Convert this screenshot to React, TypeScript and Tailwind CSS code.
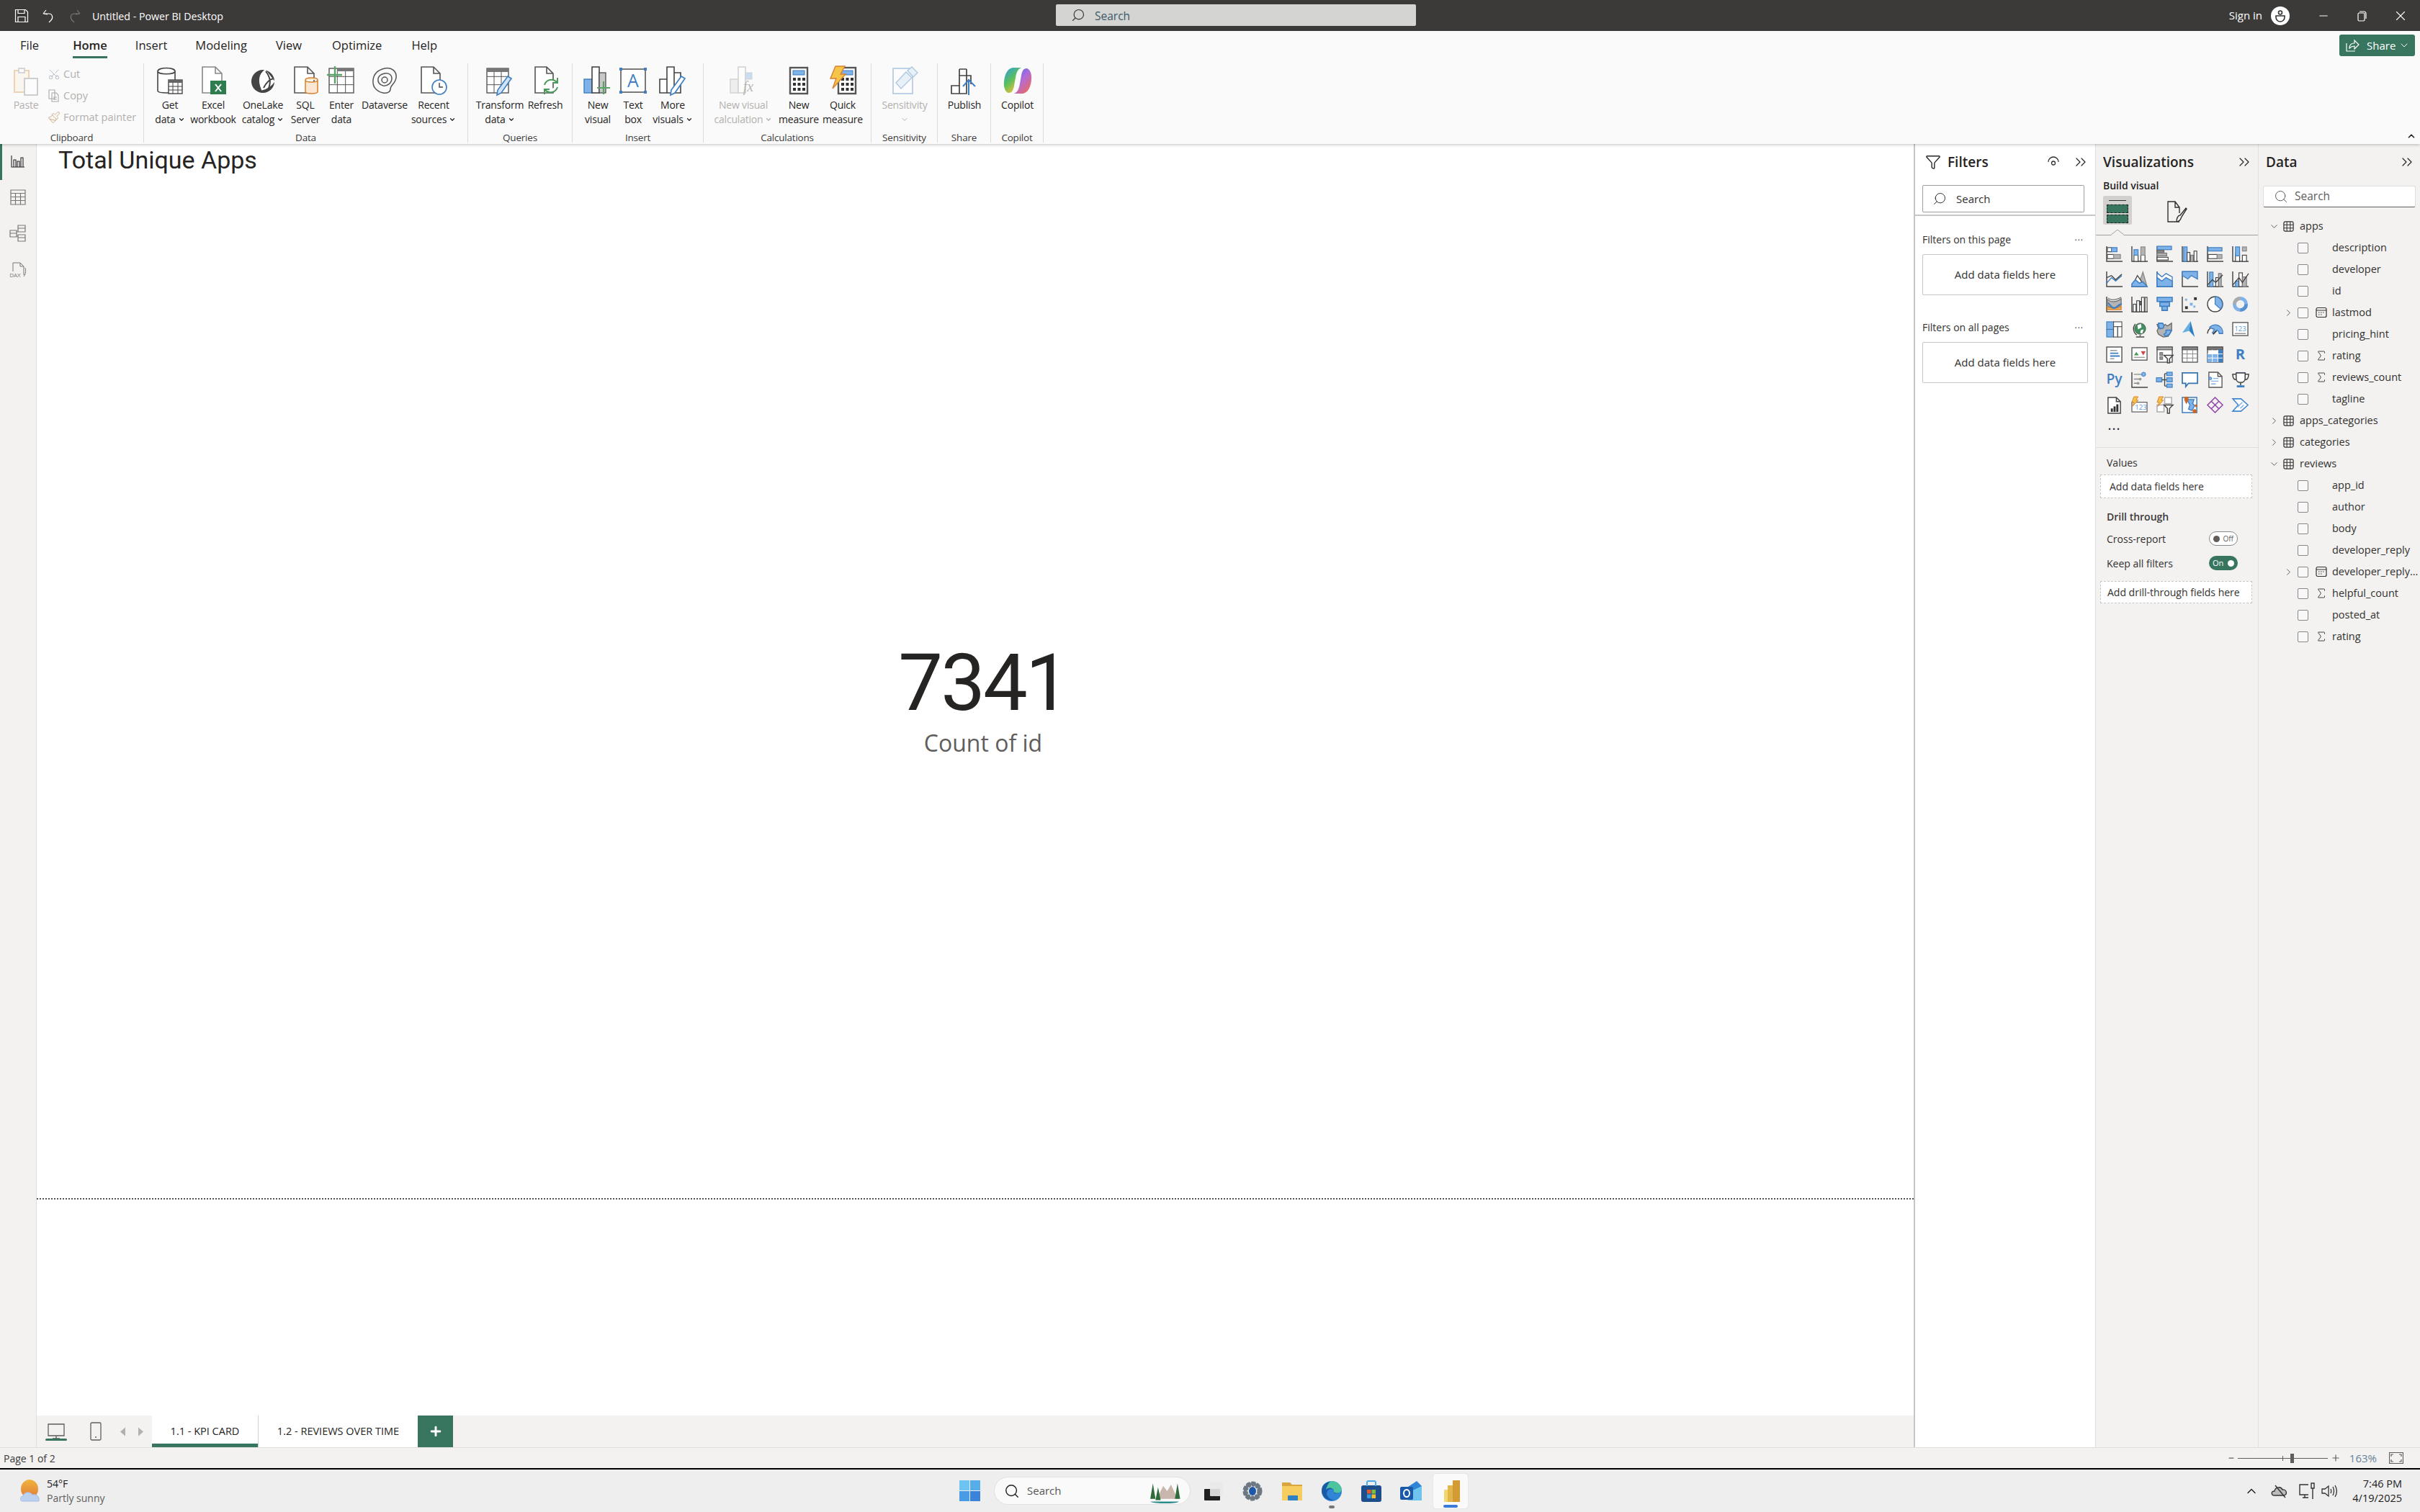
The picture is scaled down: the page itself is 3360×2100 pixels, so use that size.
import type { ReactNode } from "react"
import { ChevronDown, ChevronRight, ChevronUp, ChevronsRight, Funnel, Minus, Paintbrush, Plus, Scissors, Search, Sigma, X } from "lucide-react"

const D = "#444444"
const B = "#3f7fc1"
const L = "#7fb2e8"
const G = "#b4b4b4"

// small drawing helpers for the ribbon and visual gallery icons
function Box({ x, y, w, h, f = "#fff", s = D, sw = 1.2 }: { x: number; y: number; w: number; h: number; f?: string; s?: string; sw?: number }) {
    return <rect x={x} y={y} width={w} height={h} fill={f} stroke={s} strokeWidth={sw} />
}
function Ln({ d, s = D, sw = 1.4, f = "none" }: { d: string; s?: string; sw?: number; f?: string }) {
    return <path d={d} fill={f} stroke={s} strokeWidth={sw} />
}
const Axis = () => <Ln d="M1 1v22h23" sw={1.5} />
const Grid = ({ x, y, w, h, c = D }: { x: number; y: number; w: number; h: number; c?: string }) => (
    <g>
        <Box x={x} y={y} w={w} h={h} s={c} sw={1.4} />
        <Ln s={c} sw={1} d={`M${x} ${y + h / 3}h${w}M${x} ${y + (2 * h) / 3}h${w}M${x + w / 3} ${y}v${h}M${x + (2 * w) / 3} ${y}v${h}`} />
    </g>
)
const Pencil = () => (
    <g>
        <Ln d="M31 14l5 3-14 20-6 3 1-7z" f="#cfe2f7" s={B} sw={1.6} />
    </g>
)
const Tx = ({ x, y, t, size, c, w = 400 }: { x: number; y: number; t: string; size: number; c: string; w?: number }) => (
    <text x={x} y={y} fontSize={size} fill={c} fontWeight={w} textAnchor="middle" fontFamily="'Open Sans',sans-serif">{t}</text>
)
const Calc = ({ x = 8 }: { x?: number }) => (
    <g>
        <rect x={x} y={2} width={24} height={36} fill="#fff" stroke="#555" strokeWidth="2.4" />
        <rect x={x + 4} y={6} width={16} height={6} fill={L} stroke={B} />
        {[16, 23, 30].map((y) => [4, 10.5, 17].map((dx) => <rect key={`${y}-${dx}`} x={x + dx} y={y} width={4} height={4} fill="#333" />))}
    </g>
)

const ribbonIcons: Record<string, ReactNode> = {
    paste: (
        <g opacity="0.45">
            <Ln s="#d9a55f" f="#fbf0df" sw={2} d="M4 6h20v30H4z" />
            <Ln s="#aaa" f="#fff" sw={2} d="M10 3h8v6h-8z" />
            <Ln s="#999" f="#fff" sw={2} d="M18 17h18v23H18z" />
        </g>
    ),
    getData: (
        <g>
            <Ln f="#fff" sw={1.6} d="M3 7c0-6 24-6 24 0v27c0 4-24 4-24 0z M3 7c0 5 24 5 24 0" />
            <rect x="18" y="19" width="19" height="19" fill="#fff" stroke={D} strokeWidth="1.4" />
            <rect x="18" y="19" width="19" height="4" fill="#666" />
            <Ln sw={1} d="M18 28h19M18 33h19M24 23v15M31 23v15" />
        </g>
    ),
    excel: (
        <g>
            <Ln s="#888" f="#fff" sw={1.6} d="M5 1h18l9 9v27H5z M23 1v9h9" />
            <rect x="16" y="20" width="22" height="19" fill="#2f7d4f" />
            <Ln s="#fff" sw={2} d="M23 25l8 10M31 25l-8 10" />
        </g>
    ),
    oneLake: (
        <g>
            <circle cx="20" cy="21" r="16" fill="#444" />
            <Ln s="#fff" sw={2.5} f="#fff" d="M23 6c-8 6-9 14-4 26 6-1 13-6 16-11-4-5-7-9-12-15z" />
            <Ln s="#444" sw={2} d="M24 7c6 8 8 15 3 26M21 30c4-8 9-12 14-13" />
        </g>
    ),
    sql: (
        <g>
            <Ln s="#555" f="#fff" sw={1.6} d="M5 1h18l9 9v27H5z M23 1v9h9" />
            <Ln s="#d9812c" f="#fbe7d2" sw={1.5} d="M20 19c0-4 17-4 17 0v16c0 4-17 4-17 0z M20 19c0 4 17 4 17 0" />
        </g>
    ),
    enter: (
        <g>
            <Grid x={3} y={3} w={34} h={34} c="#555" />
            <rect x="14" y="3" width="23" height="4" fill="#777" />
            <Ln s="#5aa469" sw={2.4} d="M11 0v24M0 12h21" />
        </g>
    ),
    dataverse: (
        <g>
            <Ln s="#555" sw={1.5} d="M20 3c10-2 17 4 16 13-1 8-8 10-8 16 0 4-5 6-10 5C8 35 3 28 4 19 5 10 12 5 20 3z" />
            <Ln s="#555" sw={1.5} d="M20 10c6-1 10 2 10 7 0 6-6 11-12 10-5-1-8-5-7-10 1-4 4-6 9-7z" />
            <circle cx="20" cy="19" r="4" fill="none" stroke="#555" strokeWidth="1.5" />
        </g>
    ),
    recent: (
        <g>
            <Ln s="#555" f="#fff" sw={1.6} d="M3 1h17l9 9v27H3z M20 1v9h9" />
            <circle cx="28" cy="29" r="10" fill="#fff" stroke={B} strokeWidth="1.6" />
            <Ln s="#444" sw={1.4} d="M28 23v6h5" />
        </g>
    ),
    transform: (
        <g>
            <Grid x={2} y={3} w={30} h={34} c="#555" />
            <rect x="2" y="3" width="30" height="5" fill="#777" />
            <Pencil />
        </g>
    ),
    refresh: (
        <g>
            <Ln s="#555" f="#fff" sw={1.6} d="M6 1h16l9 9v27H6z M22 1v9h9" />
            <Ln s="#4c9a5b" f="#fff" sw={2} d="M19 26a10 10 0 0 1 17-4M37 29a10 10 0 0 1-17 4" />
            <Ln s="#4c9a5b" sw={2} d="M37 16v7h-7M19 39v-7h7" />
        </g>
    ),
    newVisual: (
        <g>
            <rect x="1" y="18" width="11" height="19" fill={L} stroke={B} strokeWidth="1.4" />
            <rect x="12" y="1" width="10" height="36" fill="#fff" stroke={D} strokeWidth="1.6" />
            <rect x="22" y="9" width="9" height="28" fill="#c8c8c8" stroke={D} strokeWidth="1.2" />
            <Ln s="#5aa469" sw={2.2} d="M28 21v18M19 30h18" />
        </g>
    ),
    textBox: (
        <g>
            <rect x="3" y="4" width="34" height="32" fill="#fff" stroke={D} strokeWidth="1.4" />
            {[[3, 4], [37, 4], [3, 36], [37, 36]].map(([x, y]) => <rect key={`${x}${y}`} x={x - 2} y={y - 2} width="4" height="4" fill={B} />)}
            <Tx x={20} y={29} t="A" size={25} c={B} />
        </g>
    ),
    more: (
        <g>
            <Ln f="#fff" sw={1.6} d="M2 18h10v19H2zM12 1h10v36H12zM22 9h9v28h-9z" />
            <Ln d="M32 14l5 3-14 20-6 3 1-7z" f="#fff" s={B} sw={1.7} />
        </g>
    ),
    visualCalc: (
        <g opacity="0.4">
            <rect x="2" y="18" width="11" height="19" fill="#ddd" stroke="#999" strokeWidth="1.4" />
            <rect x="13" y="1" width="10" height="36" fill="#fff" stroke="#999" strokeWidth="1.6" />
            <rect x="23" y="9" width="9" height="9" fill={L} stroke="#999" />
            <text x="27" y="35" fontSize="20" fontStyle="italic" fill="#555" textAnchor="middle" fontFamily="'Liberation Serif',serif">fx</text>
        </g>
    ),
    measure: <Calc />,
    quick: (
        <g>
            <Calc x={14} />
            <Ln s="#d9812c" f="#f6c44a" sw={1.4} d="M10 0h13l-6 11h7L6 31l5-14H3z" />
        </g>
    ),
    sensitivity: (
        <g opacity="0.4">
            <rect x="4" y="3" width="27" height="35" fill="#fff" stroke={B} strokeWidth="1.6" />
            <Ln s={B} f="#cfe2f7" sw={1.4} d="M24 6l6-5 8 8-6 6zM22 8l8 8-15 15-7-8z" />
        </g>
    ),
    publish: (
        <g>
            <Ln s="#444" f="#fff" sw={1.7} d="M2 27h11v11H2zM13 13h10v25H13zM13 4h10M23 4v9" />
            <Ln s="#444" sw={1.7} d="M13 4v9M23 13h6v12" />
            <Ln s={B} sw={2} d="M26 40V18M18 28l8-9 9 9" />
        </g>
    ),
    copilot: (
        <g>
            <defs>
                <linearGradient id="cpa" x1="0" y1="0" x2="0.6" y2="1">
                    <stop offset="0" stopColor="#2f9de0" />
                    <stop offset="0.55" stopColor="#5bc05b" />
                    <stop offset="1" stopColor="#f2c037" />
                </linearGradient>
                <linearGradient id="cpb" x1="0" y1="0" x2="0.8" y2="1">
                    <stop offset="0" stopColor="#3f6fe0" />
                    <stop offset="0.5" stopColor="#b06bdc" />
                    <stop offset="1" stopColor="#ee6a5a" />
                </linearGradient>
            </defs>
            <path d="M13 2h12c-5 2-7 7-8 14l-2 11c-1 6-3 10-7 10C3 37 0 29 1 21 2 11 6 3 13 2z" fill="url(#cpa)" />
            <path d="M27 38H15c5-2 7-7 8-14l2-11c1-6 3-10 7-10 5 0 8 8 7 16-1 10-5 18-12 19z" fill="url(#cpb)" />
        </g>
    ),
}

function RibbonIcon({ name }: { name: string }) {
    return <svg viewBox="0 0 40 40" className="w-[40px] h-[40px] overflow-visible">{ribbonIcons[name]}</svg>
}

function RibbonButton({ w, icon, lines, caret, off }: { w: number; icon: string; lines: string[]; caret?: boolean; off?: boolean }) {
    return (
        <div style={{ width: w }} className={`flex flex-col items-center shrink-0 ${off ? "text-[#b3b0ad]" : "text-[#252423]"}`}>
            <div className="mt-[4px] h-[44px]"><RibbonIcon name={icon} /></div>
            {lines.map((l, i) => (
                <div key={l} className="h-[20px] leading-[20px] text-[14px] tracking-[-0.2px] whitespace-nowrap flex items-center">
                    {l}
                    {caret && i === lines.length - 1 && <ChevronDown size={10} strokeWidth={3} className="ml-[3px]" />}
                </div>
            ))}
            {off && lines.length === 1 && <ChevronDown size={12} strokeWidth={2} className="mt-[4px]" />}
        </div>
    )
}

function RibbonGroup({ w, pl = 0, label, children }: { w: number; pl?: number; label: string; children: ReactNode }) {
    return (
        <div style={{ width: w, paddingLeft: pl }} className="relative h-[110px] shrink-0 border-r border-[#dcdad8]">
            <div className="flex">{children}</div>
            <div className="absolute bottom-[-3px] left-0 right-0 text-center text-[13.500px] tracking-[-0.2px] leading-[20px] text-[#3b3a39]">{label}</div>
        </div>
    )
}

// visualization gallery, left to right, top to bottom
const vizIcons: ReactNode[] = [
    <g><Axis /><Box x={2} y={3} w={6} h={6} /><Box x={8} y={3} w={8} h={6} f={L} s={B} /><Box x={2} y={13} w={9} h={6} /><Box x={11} y={13} w={10} h={6} f={G} s="#888" /></g>,
    <g><Axis /><Box x={4} y={14} w={6} h={9} /><Box x={4} y={6} w={6} h={8} f={L} s={B} /><Box x={14} y={14} w={6} h={9} /><Box x={14} y={2} w={6} h={12} f={G} s="#888" /></g>,
    <g><Axis /><Box x={1} y={1} w={21} h={5} f={L} s={B} /><Box x={1} y={7} w={10} h={4} f="#888" s="#666" /><Box x={1} y={11} w={14} h={4} f={G} s="#777" /><Box x={1} y={17} w={16} h={4} /></g>,
    <g><Axis /><Box x={3} y={2} w={5} h={21} f={L} s={B} /><Box x={8} y={10} w={4} h={13} /><Box x={13} y={14} w={4} h={9} f={G} s="#777" /><Box x={18} y={8} w={4} h={15} /></g>,
    <g><Axis /><Box x={2} y={3} w={20} h={5} f={L} s={B} /><Box x={2} y={13} w={13} h={6} /><Box x={15} y={13} w={7} h={6} f={G} s="#888" /></g>,
    <g><Axis /><Box x={5} y={11} w={6} h={12} /><Box x={5} y={2} w={6} h={13} f={L} s={B} /><Box x={15} y={14} w={6} h={9} /><Box x={15} y={2} w={6} h={6} f={G} s="#888" /></g>,
    <g><Axis /><Ln s={B} d="M1 18l7-8 6 5 9-8" /><Ln d="M1 10l7-3 6 6 9-8" /></g>,
    <g><Ln f={G} s="#888" d="M8 23L15 8l2-6 6 21z" /><Ln f="#fff" d="M1 23L9 7l5 7 4 9z" /><Ln s={B} f={L} sw={1.6} d="M1 23v-4l5-6 6 5 5-2 6 7z" /></g>,
    <g><Axis /><Ln s={B} f="#fff" d="M1 3l7 6 6-5 9 5v14H1z" /><Ln s={B} f={L} d="M1 10l7 5 6-5 9 5v8H1z" /></g>,
    <g><Axis /><Ln s={B} f={L} d="M1 1h22v11l-9-5-5 5-8-5z" /></g>,
    <g><Axis /><Box x={4} y={2} w={5} h={21} f={L} s={B} /><Box x={13} y={10} w={4} h={13} /><Box x={17} y={4} w={4} h={19} f={G} s="#777" /><Ln d="M1 21l7-8 5 4 10-11" /></g>,
    <g><Axis /><Box x={5} y={15} w={5} h={8} f={L} s={B} /><Box x={10} y={3} w={5} h={20} /><Box x={15} y={9} w={6} h={14} f={G} s="#777" /><Ln d="M1 21l9-11 5 7 9-13" /></g>,
    <g><Axis /><Ln f={G} s="#777" d="M2 5c6 5 13 4 20-1v9c-7 5-14 6-20 1z" /><Ln s="#d9812c" f="#e8b26a" d="M2 16c6 2 14 3 20-1v5H2z" /><Ln s={B} sw={2.4} d="M3 10c5 6 7 9 11 7 4-2 5-6 9-5" /><Ln d="M3 3c5 4 11 3 19-1" sw={1} /></g>,
    <g><Axis /><Box x={3} y={12} w={4} h={11} /><Box x={8} y={7} w={4} h={16} /><Box x={12} y={8} w={3} h={5} f="#666" /><Box x={15} y={2} w={4} h={21} /><Box x={20} y={2} w={3} h={21} /></g>,
    <g><Ln s={B} f={L} sw={1.6} d="M1 2h22v6H1zM5 9h14v6H5zM8 15h8v6H8z" /></g>,
    <g><Axis /><rect x="5" y="4" width="3" height="3" fill={L} /><rect x="12" y="10" width="4" height="4" fill={L} /><rect x="18" y="2" width="4" height="4" fill="#333" /><rect x="5" y="15" width="4" height="4" fill="#333" /><rect x="17" y="14" width="3" height="3" fill={L} /></g>,
    <g><circle cx="12" cy="12" r="11" fill="#fff" stroke={D} strokeWidth="1.4" /><path d="M12 12V1a11 11 0 0 1 8 18z" fill={L} stroke={B} strokeWidth="1.2" /></g>,
    <g><circle cx="12" cy="12" r="8.5" fill="none" stroke={L} strokeWidth="5" /><path d="M12 20.5A8.5 8.5 0 0 0 20.5 12" fill="none" stroke={B} strokeWidth="5" opacity="0.65" /><path d="M3.5 12A8.5 8.5 0 0 1 12 3.500" fill="none" stroke="#aaa" strokeWidth="5" /></g>,
    <g><Box x={1} y={1} w={10} h={11} f={L} s={B} /><Box x={1} y={12} w={10} h={11} f={L} s={B} /><Box x={11} y={1} w={12} h={7} s="#555" /><Box x={11} y={8} w={6} h={15} s="#555" /><Box x={17} y={8} w={6} h={15} s="#555" /></g>,
    <g><circle cx="13" cy="11" r="8" fill="#3f8f5f" stroke="#555" /><path d="M9 6l5-2 1 5-5 3zM14 13l4-1-2 6-3-1z" fill="#fff" /><Ln d="M6 4a11 11 0 0 0 2 16M13 20v2M7 23h12" /></g>,
    <g><Ln s="#666" f={G} d="M1 5l6 0 2 2 4-2 3 2 6-4v11l-5 8-7 1-7-4-2-5 2-4z" /><Ln s={B} f={L} sw={1.6} d="M3 3h6l2 3-1 4-5 1-2-4zM14 13h8l-3 6-6 3-2-3 3-2z" /></g>,
    <g><path d="M13 0L1 17l10-3z" fill="#65b0e0" /><path d="M13 0L11 14l8 9z" fill="#2f7fc1" /></g>,
    <g><Ln sw={1.6} d="M1 18a11 11 0 0 1 6-9" /><Ln s={B} f={L} d="M4 9a11 11 0 0 1 19 9h-5a6 6 0 0 0-3-5l-5 5-2-1 3-5a6 6 0 0 0-3-1z" /><Ln sw={2} d="M9 19l5-5" /></g>,
    <g><Box x={1} y={2} w={22} h={19} s="#555" sw={1.4} /><Tx x={12} y={15} t="123" size={10} c="#5a9bd8" /><Ln s="#888" d="M4 18h16" /></g>,
    <g><Box x={1} y={1} w={22} h={22} s="#555" sw={1.5} /><Ln s="#999" d="M6 6h10M6 18h6" /><Ln s={B} sw={2} d="M6 10h12M6 14h14" /></g>,
    <g><Box x={1} y={2} w={22} h={18} s="#555" sw={1.4} /><path d="M4 13l3.500-5 3.500 5z" fill="#4c9a5b" /><path d="M14 7h7l-3.500 6z" fill="#d64545" /><Ln s="#999" d="M4 16h16" /></g>,
    <g><Box x={1} y={1} w={22} h={22} s="#555" sw={1.4} /><Box x={1} y={1} w={22} h={4} f="#aaa" s="#555" /><Box x={5} y={9} w={4} h={4} f="#999" s="#777" /><Box x={5} y={15} w={4} h={4} f="#999" s="#777" /><Ln f="#fff" sw={1.6} d="M11 13h13l-5 5v6h-3v-6z" /></g>,
    <g><Box x={1} y={1} w={22} h={22} s="#555" sw={1.4} /><Box x={1} y={1} w={22} h={4} f="#888" s="#555" /><Ln s="#888" sw={1} d="M1 11h22M1 17h22M8 5v18M16 5v18" /></g>,
    <g><Box x={1} y={1} w={22} h={22} s="#555" sw={1.4} /><Box x={1} y={1} w={22} h={4} f="#777" s="#555" /><rect x="1" y="11" width="15" height="12" fill={L} /><rect x="16" y="5" width="7" height="18" fill={B} /><Ln s="#fff" sw={1} d="M1 11h22M1 17h22M8 5v18M16 5v18" /></g>,
    <Tx x={12} y={19} t="R" size={21} c={B} w={700} />,
    <Tx x={12} y={18} t="Py" size={20} c={B} w={600} />,
    <g><Axis /><Ln s="#888" d="M4 4h12M4 11h8M4 17h6" /><circle cx="18" cy="4" r="3" fill={L} stroke={B} /><circle cx="13" cy="11" r="2" fill="#999" /><circle cx="10" cy="17" r="2" fill="#999" /></g>,
    <g><Box x={0} y={9} w={8} h={6} f={L} s={B} /><Ln d="M8 12h5M12 3v18M12 3h3M12 12h3M12 21h3" /><Box x={15} y={1} w={8} h={5} f={L} s={B} /><Box x={15} y={9} w={8} h={6} f={L} s={B} /><Box x={15} y={18} w={8} h={5} f={L} s={B} /></g>,
    <g><Ln s="#3575ad" f="#fff" sw={1.8} d="M1 2h22v15H10l-4 5v-5H1z" /></g>,
    <g><Ln s="#555" f="#fff" sw={1.4} d="M3 1h13l6 6v16H3z M16 1v6h6" /><circle cx="5" cy="10" r="2" fill={L} stroke={B} /><Ln s={L} d="M9 10h8M6 14h11M6 18h7" /></g>,
    <g><rect x="6" y="1" width="13" height="3" fill={B} /><Ln f="#fff" sw={1.6} d="M6 2h13v8c0 4-3 6-6.500 6S6 14 6 10zM6 4H1c0 6 2 8 5 8M19 4h5c0 6-2 8-5 8M12.500 16v4" /><rect x="7" y="20" width="11" height="3" fill={B} /></g>,
    <g><Ln f="#fff" sw={1.5} d="M3 1h12l6 6v17H3z M15 1v6h6" /><rect x="7" y="17" width="3" height="5" fill="#333" /><rect x="11" y="14" width="3" height="8" fill="#333" /><rect x="15" y="11" width="3" height="11" fill="#333" /></g>,
    <g><Box x={1} y={8} w={22} h={14} s="#555" /><Tx x={14} y={19} t="123" size={10} c="#5a9bd8" /><Ln s="#d9812c" f="#f6c44a" sw={1} d="M4 0h6l-3 5h3L2 14l2-6H1z" /></g>,
    <g><Box x={12} y={1} w={10} h={9} s="#aaa" sw={1.5} /><Box x={1} y={12} w={10} h={10} s="#aaa" sw={1.5} /><Ln f="#fff" sw={1.5} d="M11 12h13l-5 5v7h-3v-7z" /><Ln s="#d9812c" f="#f6c44a" sw={1} d="M4 0h6l-3 5h3L2 14l2-6H1z" /></g>,
    <g><Box x={1} y={1} w={21} h={22} s={B} sw={1.6} /><Ln s={B} f={L} d="M8 4h10l-2 6 3 3-4 7-5-2 2-6z" /><path d="M4 0h6v5l-3 6-3-6z" fill="#c9682a" /><circle cx="21" cy="13" r="2" fill="#c9682a" /><circle cx="19" cy="21" r="3" fill="#c9682a" /></g>,
    <g><Ln s="#8e3fa8" f="none" sw={1.5} d="M12 1l11 11-11 11L1 12zM6.500 6.500l11 11M17.500 6.500l-11 11" /></g>,
    <g><Ln s="#3f86cf" f="#fff" sw={1.6} d="M1 3h12l10 9-10 9H1l8-9z" /><Ln s={L} sw={1.5} d="M8 15l7-7M12 17l5-5" /></g>,
]

function VizIcon({ children }: { children: ReactNode }) {
    return (
        <div className="w-[35px] h-[35px] flex items-center justify-center">
            <svg viewBox="0 0 24 24" className="w-[23px] h-[23px] overflow-visible">{children}</svg>
        </div>
    )
}

const TableGlyph = () => (
    <svg viewBox="0 0 16 16" className="w-[15px] h-[15px] shrink-0">
        <rect x="1" y="1" width="14" height="14" rx="2" fill="none" stroke="#323130" strokeWidth="1.3" />
        <path d="M1 5.500h14M1 10.500h14M5.500 1v14M10.500 1v14" stroke="#323130" strokeWidth="1.1" />
    </svg>
)
const CalGlyph = () => (
    <svg viewBox="0 0 16 16" className="w-[16px] h-[16px]">
        <rect x="1" y="1.500" width="14" height="13" rx="2" fill="none" stroke="#323130" strokeWidth="1.2" />
        <path d="M1 5h14" stroke="#323130" />
        <path d="M4 8h1.500M7 8h1.500M10 8h1.500M4 11h1.500M7 11h1.500" stroke="#323130" />
    </svg>
)

function TableRow({ name, open }: { name: string; open?: boolean }) {
    return (
        <div className="h-[30px] flex items-center text-[14.500px] text-[#323130]">
            <div className="w-[34px] flex justify-end pr-[5px]">
                {open ? <ChevronDown size={15} strokeWidth={1.2} /> : <ChevronRight size={15} strokeWidth={1.2} />}
            </div>
            <TableGlyph />
            <span className="ml-[8px]">{name}</span>
        </div>
    )
}

function FieldRow({ name, kind, expand }: { name: string; kind?: "sum" | "date"; expand?: boolean }) {
    return (
        <div className="h-[30px] flex items-center text-[14.500px] text-[#323130]">
            <div className="w-[54px] flex justify-end pr-[5px]">
                {expand && <ChevronRight size={15} strokeWidth={1.2} />}
            </div>
            <div className="w-[15px] h-[15px] border border-[#8a8886] rounded-[2px] bg-[#f8f8f8] shrink-0" />
            <div className="w-[33px] flex justify-center pl-[3px] shrink-0">
                {kind === "sum" && <Sigma size={18} strokeWidth={1.2} />}
                {kind === "date" && <CalGlyph />}
            </div>
            <span className="whitespace-nowrap">{name}</span>
        </div>
    )
}

function FilterBlock({ label }: { label: string }) {
    return (
        <div className="h-[122px]">
            <div className="h-[42px] flex items-center justify-between text-[14px] text-[#323130] pr-[4px]">
                <span>{label}</span>
                <span className="tracking-[1px] text-[12px] pb-[4px]">...</span>
            </div>
            <div className="w-[230px] h-[57px] bg-white border border-[#c8c6c4] rounded-[2px] flex items-center justify-center text-[15px] text-[#323130]">
                Add data fields here
            </div>
        </div>
    )
}

function Toggle({ on }: { on?: boolean }) {
    if (on) {
        return (
            <div className="w-[40px] h-[20px] rounded-full bg-[#37755f] flex items-center justify-between px-[5px] text-[11px] text-white">
                On<div className="w-[9px] h-[9px] rounded-full bg-white" />
            </div>
        )
    }
    return (
        <div className="w-[40px] h-[20px] rounded-full border border-[#8a8886] bg-white flex items-center justify-between px-[5px] text-[10px] text-[#605e5c]">
            <div className="w-[9px] h-[9px] rounded-full bg-[#605e5c]" />Off
        </div>
    )
}

function TaskIcon({ children, active, dot }: { children: ReactNode; active?: boolean; dot?: boolean }) {
    return (
        <div className={`relative w-[48px] h-[48px] rounded-[4px] flex items-center justify-center mx-[3.500px] ${active ? "bg-[#fafafa] shadow-[0_0_1px_#bbb]" : ""}`}>
            <svg viewBox="0 0 32 32" className="w-[32px] h-[32px]">{children}</svg>
            {active && <div className="absolute bottom-[1px] w-[20px] h-[4px] rounded-full bg-[#3a7bd5]" />}
            {dot && <div className="absolute bottom-[0px] w-[8px] h-[4px] rounded-full bg-[#777]" />}
        </div>
    )
}

export default function App() {
    return (
        <div className="w-[3360px] h-[2100px] overflow-hidden flex flex-col bg-white font-['Open_Sans',sans-serif] text-[#252423]">
            {/* Title bar */}
            <div className="relative h-[43px] shrink-0 bg-[#3b3a39] flex items-center text-white">
                <svg viewBox="0 0 20 20" className="ml-[20px] w-[20px] h-[20px]" fill="none" stroke="#fff" strokeWidth="1.2">
                    <path d="M1.500 1.500h14l3 3v14h-17zM5 1.500v5h9v-5M5 18.500v-7h10v7" />
                </svg>
                <svg viewBox="0 0 20 20" className="ml-[17px] w-[20px] h-[20px]" fill="none" stroke="#fff" strokeWidth="1.2">
                    <path d="M3 7l4-5M3 7l6 1M3 7h8c5 0 6 6 3 9l-3 3" />
                </svg>
                <svg viewBox="0 0 20 20" className="ml-[17px] w-[20px] h-[20px]" fill="none" stroke="#777" strokeWidth="1.2">
                    <path d="M17 7l-4-5M17 7l-6 1M17 7H9C4 7 3 13 6 16l3 3" />
                </svg>
                <span className="ml-[14px] mt-[3px] text-[14.200px]">Untitled - Power BI Desktop</span>

                <div className="absolute left-[1466px] top-[6px] w-[500px] h-[30px] bg-[#d4d4d2] rounded-[2px] flex items-center pl-[21px] text-[#3b5a6a] text-[15.500px]">
                    <Search size={20} strokeWidth={1.4} className="-scale-x-100 text-[#333]" />
                    <span className="ml-[13px] mt-[3px]">Search</span>
                </div>

                <div className="ml-auto flex items-center">
                    <span className="text-[15px]">Sign in</span>
                    <div className="ml-[12px] w-[26px] h-[26px] rounded-full bg-white flex items-center justify-center">
                        <svg viewBox="0 0 20 20" className="w-[20px] h-[20px]" fill="none" stroke="#333" strokeWidth="1.6">
                            <circle cx="10" cy="5.500" r="2.500" />
                            <path d="M4 10h12v2a6 6 0 0 1-12 0z" />
                        </svg>
                    </div>
                    <Minus size={18} strokeWidth={1.3} className="ml-[38px]" />
                    <svg viewBox="0 0 16 16" className="ml-[36px] w-[16px] h-[16px]" fill="none" stroke="#fff" strokeWidth="1.2">
                        <rect x="3" y="4" width="9" height="11" rx="1.500" />
                        <path d="M5 2h6a3 3 0 0 1 3 3v7" />
                    </svg>
                    <X size={22} strokeWidth={1.2} className="ml-[35px] mr-[16px]" />
                </div>
            </div>

            {/* Ribbon */}
            <div className="relative z-10 h-[157px] shrink-0 bg-[#fafafa] shadow-[0_1px_4px_rgba(0,0,0,0.25)]">
                <div className="h-[45px] flex text-[16.500px] text-[#252423]">
                    {[
                        ["File", "ml-[28px]"],
                        ["Home", "ml-[47px] font-semibold border-b-[3px] border-[#37755f]"],
                        ["Insert", "ml-[39px]"],
                        ["Modeling", "ml-[39px]"],
                        ["View", "ml-[40px]"],
                        ["Optimize", "ml-[42px]"],
                        ["Help", "ml-[41px]"],
                    ].map(([t, c]) => (
                        <div key={t} className={`h-[38px] pt-[8px] leading-[24px] whitespace-nowrap ${c}`}>{t}</div>
                    ))}
                </div>
                <div className="flex">
                    <RibbonGroup w={200} label="Clipboard">
                        <div className="flex flex-col items-center w-[66px] pl-[6px] text-[#b3b0ad]">
                            <div className="mt-[4px] h-[44px]"><RibbonIcon name="paste" /></div>
                            <div className="text-[14px] tracking-[-0.2px] leading-[20px]">Paste</div>
                        </div>
                        <div className="text-[14.500px] text-[#b3b0ad]">
                            <div className="h-[30px] flex items-center"><Scissors size={18} strokeWidth={1.2} className="-rotate-90 text-[#8a9ab0] opacity-70" /><span className="ml-[4px]">Cut</span></div>
                            <div className="h-[30px] flex items-center">
                                <svg viewBox="0 0 18 18" className="w-[18px] h-[18px]" fill="#fff" stroke="#a8a6a4" strokeWidth="1.1">
                                    <path d="M2 1h8v12H2zM6 5h6l3 3v9H6zM8 11h5M8 14h5" />
                                </svg>
                                <span className="ml-[4px]">Copy</span>
                            </div>
                            <div className="h-[30px] flex items-center"><Paintbrush size={18} strokeWidth={1.2} className="text-[#c9a87a]" /><span className="ml-[4px] whitespace-nowrap">Format painter</span></div>
                        </div>
                    </RibbonGroup>
                    <RibbonGroup w={450} pl={6} label="Data">
                        <RibbonButton w={60} icon="getData" lines={["Get", "data"]} caret />
                        <RibbonButton w={60} icon="excel" lines={["Excel", "workbook"]} />
                        <RibbonButton w={78} icon="oneLake" lines={["OneLake", "catalog"]} caret />
                        <RibbonButton w={40} icon="sql" lines={["SQL", "Server"]} />
                        <RibbonButton w={60} icon="enter" lines={["Enter", "data"]} />
                        <RibbonButton w={60} icon="dataverse" lines={["Dataverse"]} />
                        <RibbonButton w={76} icon="recent" lines={["Recent", "sources"]} caret />
                    </RibbonGroup>
                    <RibbonGroup w={145} pl={4} label="Queries">
                        <RibbonButton w={80} icon="transform" lines={["Transform", "data"]} caret />
                        <RibbonButton w={46} icon="refresh" lines={["Refresh"]} />
                    </RibbonGroup>
                    <RibbonGroup w={182} pl={10} label="Insert">
                        <RibbonButton w={50} icon="newVisual" lines={["New", "visual"]} />
                        <RibbonButton w={48} icon="textBox" lines={["Text", "box"]} />
                        <RibbonButton w={62} icon="more" lines={["More", "visuals"]} caret />
                    </RibbonGroup>
                    <RibbonGroup w={233} pl={8} label="Calculations">
                        <RibbonButton w={94} icon="visualCalc" lines={["New visual", "calculation"]} caret off />
                        <RibbonButton w={60} icon="measure" lines={["New", "measure"]} />
                        <RibbonButton w={62} icon="quick" lines={["Quick", "measure"]} />
                    </RibbonGroup>
                    <RibbonGroup w={92} label="Sensitivity">
                        <RibbonButton w={92} icon="sensitivity" lines={["Sensitivity"]} off />
                    </RibbonGroup>
                    <RibbonGroup w={74} label="Share">
                        <RibbonButton w={74} icon="publish" lines={["Publish"]} />
                    </RibbonGroup>
                    <RibbonGroup w={73} label="Copilot">
                        <RibbonButton w={73} icon="copilot" lines={["Copilot"]} />
                    </RibbonGroup>
                </div>
                <div className="absolute top-[5px] right-[7px] w-[105px] h-[30px] rounded-[3px] bg-[#37755f] text-white flex items-center text-[15px] pl-[8px]">
                    <svg viewBox="0 0 20 20" className="w-[20px] h-[20px]" fill="none" stroke="#fff" strokeWidth="1.2">
                        <path d="M2 7v11h12M6 14c0-5 3-7 7-7V3l6 6-6 6v-4c-3 0-5 1-7 3z" />
                    </svg>
                    <span className="ml-[10px]">Share</span>
                    <ChevronDown size={16} strokeWidth={1.5} className="ml-[4px]" />
                </div>
                <ChevronUp size={14} strokeWidth={3} className="absolute right-[5px] bottom-[4px] text-[#252423]" />
            </div>

            {/* Main */}
            <div className="h-[1810px] shrink-0 flex">
                {/* Left rail */}
                <div className="w-[51px] shrink-0 bg-[#f3f2f1] border-r border-[#e1dfdd] flex flex-col items-center relative">
                    <div className="absolute left-0 top-0 w-[3px] h-[50px] bg-[#37755f]" />
                    <svg viewBox="0 0 20 20" className="mt-[14px] w-[20px] h-[20px]" fill="none" stroke="#252423" strokeWidth="1.1">
                        <path d="M1 2v16h18M4 8h3v10H4zM9 10h3v8H9zM14 5h3v13h-3z" />
                    </svg>
                    <svg viewBox="0 0 22 22" className="mt-[29px] w-[22px] h-[22px]" fill="none" stroke="#797775" strokeWidth="1.2">
                        <path d="M1 1h20v20H1zM1 5.500h20M1 10.500h20M1 15.500h20M7.500 5.500V21M14.500 5.500V21" />
                    </svg>
                    <svg viewBox="0 0 24 24" className="mt-[27px] w-[24px] h-[24px]" fill="none" stroke="#797775" strokeWidth="1.2">
                        <path d="M1 8h9v9H1zM1 12h9M12 1h10v9H12zM12 5h10M12 14h10v9H12zM12 18h10M10 10h2M10 16h2" />
                    </svg>
                    <svg viewBox="0 0 24 24" className="mt-[28px] w-[24px] h-[24px] overflow-visible" fill="none" stroke="#797775" strokeWidth="1">
                        <path d="M5 13V1h10l5 5v12M15 1v5h5M22 8c1 4 1 8-2 12" />
                        <text x="8" y="21" fontSize="8" fill="#797775" stroke="none" textAnchor="middle">DAX</text>
                    </svg>
                </div>

                {/* Canvas */}
                <div className="w-[2606px] shrink-0 flex flex-col min-w-0">
                    <div className="h-[1466px] shrink-0 bg-white border-b-2 border-dotted border-[#555] flex flex-col">
                        <div className="h-[44px] pl-[30px] font-['Roboto',sans-serif] text-[34px] leading-[44px] text-[#252423] whitespace-nowrap">Total Unique Apps</div>
                        <div className="mt-[650px] pl-[22px] flex flex-col items-center">
                            <div className="font-['Roboto',sans-serif] text-[110px] leading-[110px] tracking-[-3px] text-[#252423]">7341</div>
                            <div className="mt-[6px] text-[32px] leading-[44px] text-[#605e5c]">Count of id</div>
                        </div>
                    </div>
                    <div className="flex-1 bg-white" />
                    <div className="h-[44px] shrink-0 bg-[#f3f2f1] flex items-stretch">
                        <div className="w-[54px] flex flex-col items-center justify-center relative">
                            <svg viewBox="0 0 24 24" className="w-[24px] h-[24px]" fill="none" stroke="#605e5c" strokeWidth="1.3">
                                <path d="M1 2h22v16H1zM12 18v4M7 22h10" />
                            </svg>
                            <div className="absolute bottom-[9px] left-[12px] w-[30px] h-[3px] rounded bg-[#37755f]" />
                        </div>
                        <div className="w-[50px] pl-[6px] flex items-center justify-center">
                            <svg viewBox="0 0 16 26" className="w-[16px] h-[26px]" fill="none" stroke="#605e5c" strokeWidth="1.3">
                                <rect x="1" y="1" width="14" height="24" rx="1.500" />
                                <path d="M7 21h2" />
                            </svg>
                        </div>
                        <div className="w-[56px] flex items-center justify-center gap-[18px] text-[#b3b0ad]">
                            <svg viewBox="0 0 8 14" className="w-[7px] h-[13px]" fill="currentColor"><path d="M8 0v14L0 7z" /></svg>
                            <svg viewBox="0 0 8 14" className="w-[7px] h-[13px]" fill="currentColor"><path d="M0 0v14l8-7z" /></svg>
                        </div>
                        <div className="w-[147px] bg-white border-b-[5px] border-[#37755f] flex items-center justify-center text-[14.500px] font-medium pt-[4px]">1.1 - KPI CARD</div>
                        <div className="w-[222px] bg-white border-l border-[#d2d0ce] flex items-center justify-center text-[14.500px]">1.2 - REVIEWS OVER TIME</div>
                        <div className="w-[49px] bg-[#37755f] flex items-center justify-center text-white">
                            <Plus size={20} strokeWidth={3.5} />
                        </div>
                    </div>
                </div>

                {/* Filters pane */}
                <div className="w-[252px] shrink-0 bg-white border-l-2 border-[#c8c6c4] flex flex-col">
                    <div className="h-[50px] flex items-center pl-[14px] pr-[8px] shrink-0">
                        <Funnel size={22} strokeWidth={1.5} />
                        <span className="ml-[9px] text-[19px] font-semibold">Filters</span>
                        <svg viewBox="0 0 16 16" className="ml-auto w-[16px] h-[16px]" fill="none" stroke="#323130" strokeWidth="1.3">
                            <path d="M1 8a7 7 0 0 1 14 0" />
                            <circle cx="8" cy="9.500" r="2.500" />
                        </svg>
                        <ChevronsRight size={24} strokeWidth={1.2} className="ml-[18px]" />
                    </div>
                    <div className="pl-[10px] pr-[14px] h-[50px] shrink-0 border-b-2 border-[#c8c6c4]">
                        <div className="w-[225px] mt-[7px] h-[38px] border border-[#a19f9d] rounded-[2px] flex items-center pl-[13px] text-[15px] text-[#323130]">
                            <Search size={20} strokeWidth={1.2} className="-scale-x-100" />
                            <span className="ml-[13px]">Search</span>
                        </div>
                    </div>
                    <div className="pl-[10px] pr-[12px] pt-[11px]">
                        <FilterBlock label="Filters on this page" />
                        <FilterBlock label="Filters on all pages" />
                    </div>
                </div>

                {/* Visualizations pane */}
                <div className="w-[226px] shrink-0 bg-[#f3f2f1] border-l border-[#e1dfdd] flex flex-col">
                    <div className="h-[50px] shrink-0 flex items-center justify-between pl-[10px] pr-[7px]">
                        <span className="text-[19px] font-semibold">Visualizations</span>
                        <ChevronsRight size={24} strokeWidth={1.2} />
                    </div>
                    <div className="h-[16px] pl-[10px] text-[14px] leading-[16px] font-semibold shrink-0">Build visual</div>
                    <div className="relative h-[62px] shrink-0 mt-[-1px] pt-[7px] pl-[10px] flex border-b border-[#a19f9d]">
                        <div className="w-[40px] h-[40px] bg-[#d2d0ce] rounded-[2px] flex flex-col items-center pt-[6px]">
                            <div className="w-[24px] h-[1px] bg-[#333]" />
                            <div className="mt-[5px] w-[30px] h-[12px] bg-[#37755f] border border-dashed border-[#222]" />
                            <div className="mt-[2px] w-[30px] h-[12px] bg-[#37755f] border border-dashed border-[#222]" />
                        </div>
                        <svg viewBox="0 0 30 32" className="ml-[48px] mt-[6px] w-[30px] h-[32px]" fill="none" stroke="#323130" strokeWidth="1.4">
                            <path d="M18 30H2V2h10l6 8v8M12 2v8h6M14 30c5 0 6-4 7-7l7-11-1-1-8 10c-3 0-5 4-5 9z" />
                        </svg>
                        <svg viewBox="0 0 20 8" className="absolute left-[20px] bottom-[-1px] w-[20px] h-[8px]">
                            <path d="M0 8L10 0l10 8" fill="#f3f2f1" stroke="#a19f9d" />
                        </svg>
                    </div>
                    <div className="grid grid-cols-[repeat(6,35px)] pl-[8px] pt-[8px] shrink-0">
                        {vizIcons.map((ic, i) => <VizIcon key={i}>{ic}</VizIcon>)}
                    </div>
                    <div className="h-[42px] pl-[17px] pt-[4px] pb-[10px] shrink-0 border-b border-[#e1dfdd] text-[14px] font-bold leading-[16px] tracking-[2px]">...</div>
                    <div className="pl-[6px] pr-[8px] text-[14px] text-[#323130]">
                        <div className="h-[37px] pl-[9px] flex items-center pt-[4px]">Values</div>
                        <div className="h-[33px] bg-white border border-dashed border-[#c8c6c4] flex items-center pl-[12px]">Add data fields here</div>
                        <div className="h-[42px] pl-[9px] pt-[9px] flex items-center font-semibold text-[#3b3a39]">Drill through</div>
                        <div className="h-[28px] pl-[9px] pr-[20px] flex items-center justify-between"><span>Cross-report</span><Toggle /></div>
                        <div className="h-[40px] pl-[9px] pr-[20px] flex items-center justify-between"><span>Keep all filters</span><Toggle on /></div>
                        <div className="mt-[5px] h-[31px] bg-white border border-dashed border-[#c8c6c4] flex items-center pl-[9px] whitespace-nowrap">Add drill-through fields here</div>
                    </div>
                </div>

                {/* Data pane */}
                <div className="flex-1 bg-[#f3f2f1] border-l border-[#e1dfdd] flex flex-col min-w-0">
                    <div className="h-[50px] shrink-0 flex items-center justify-between pl-[10px] pr-[6px]">
                        <span className="text-[19px] font-semibold">Data</span>
                        <ChevronsRight size={24} strokeWidth={1.2} />
                    </div>
                    <div className="ml-[6px] mr-[6px] mt-[8px] h-[30px] shrink-0 bg-white border border-[#e1dfdd] border-b-[#605e5c] rounded-[3px] flex items-center pl-[14px] text-[15.500px] text-[#605e5c]">
                        <Search size={20} strokeWidth={1.2} />
                        <span className="ml-[9px]">Search</span>
                    </div>
                    <div className="mt-[11px] overflow-hidden">
                        <TableRow name="apps" open />
                        <FieldRow name="description" />
                        <FieldRow name="developer" />
                        <FieldRow name="id" />
                        <FieldRow name="lastmod" kind="date" expand />
                        <FieldRow name="pricing_hint" />
                        <FieldRow name="rating" kind="sum" />
                        <FieldRow name="reviews_count" kind="sum" />
                        <FieldRow name="tagline" />
                        <TableRow name="apps_categories" />
                        <TableRow name="categories" />
                        <TableRow name="reviews" open />
                        <FieldRow name="app_id" />
                        <FieldRow name="author" />
                        <FieldRow name="body" />
                        <FieldRow name="developer_reply" />
                        <FieldRow name="developer_reply..." kind="date" expand />
                        <FieldRow name="helpful_count" kind="sum" />
                        <FieldRow name="posted_at" />
                        <FieldRow name="rating" kind="sum" />
                    </div>
                </div>
            </div>

            {/* Status bar */}
            <div className="h-[29px] shrink-0 bg-[#f3f2f1] border-t border-[#e1dfdd] flex items-center pl-[5px] text-[14px] text-[#3b3a39]">
                <span>Page 1 of 2</span>
                <div className="ml-auto flex items-center text-[#605e5c]">
                    <Minus size={10} strokeWidth={3} />
                    <div className="relative ml-[4px] w-[125px] h-[1px] bg-[#605e5c]">
                        <div className="absolute left-[62px] top-[-3px] w-[1px] h-[7px] bg-[#605e5c]" />
                        <div className="absolute left-[73px] top-[-6px] w-[5px] h-[13px] bg-[#605e5c]" />
                    </div>
                    <Plus size={14} strokeWidth={2} className="ml-[4px]" />
                    <span className="ml-[12px] text-[15px] text-[#69829a]">163%</span>
                    <svg viewBox="0 0 20 16" className="ml-[17px] mr-[23px] w-[20px] h-[16px]" fill="none" stroke="#605e5c" strokeWidth="1.2">
                        <path d="M.500.500h19v15H.500zM3 6V3h3M17 6V3h-3M3 10v3h3M17 10v3h-3" />
                    </svg>
                </div>
            </div>
            <div className="h-[2px] shrink-0 bg-black" />

            {/* Windows taskbar */}
            <div className="flex-1 bg-[#eeeeee] flex items-center">
                <div className="w-[1332px] shrink-0 flex items-center pl-[28px]">
                    <svg viewBox="0 0 28 32" className="w-[28px] h-[32px]">
                        <defs>
                            <linearGradient id="sun" x1="0" y1="0" x2="0" y2="1">
                                <stop offset="0" stopColor="#f0b43c" />
                                <stop offset="1" stopColor="#e07b3c" />
                            </linearGradient>
                        </defs>
                        <ellipse cx="13" cy="13" rx="12" ry="13" fill="url(#sun)" />
                        <path d="M3 30c-4 0-4-7 1-7 1-6 10-7 13-2 6-1 10 2 9 9z" fill="#bcd0f0" stroke="#a5bee8" />
                    </svg>
                    <div className="ml-[9px] text-[14px] leading-[20px]">
                        <div className="text-[#1b1b1b]">54°F</div>
                        <div className="text-[#605e5c]">Partly sunny</div>
                    </div>
                </div>
                <div className="flex items-center">
                    <div className="grid grid-cols-2 gap-[1px] w-[29px] h-[29px]">
                        <div className="bg-[#6ec3f2]" />
                        <div className="bg-[#55aeea]" />
                        <div className="bg-[#4a9be6]" />
                        <div className="bg-[#3a83da]" />
                    </div>
                    <div className="ml-[19px] w-[273px] h-[39px] rounded-full bg-[#fafafa] border border-[#e0e0e0] flex items-center pl-[13px] text-[15px] text-[#555]">
                        <Search size={22} strokeWidth={1.6} className="text-[#222]" />
                        <span className="ml-[10px]">Search</span>
                        <svg viewBox="0 0 54 40" className="ml-auto mr-[9px] w-[54px] h-[36px]">
                            <path d="M16 32L26 12l6 8 6-10 10 22z" fill="#c8b6ac" />
                            <path d="M6 36h44c-4 4-36 4-44 0z" fill="#2e8a8a" />
                            <path d="M6 32L10 8l4 24zM14 34L18 14l4 20zM44 32l4-24 4 24z" fill="#2f6b3a" />
                        </svg>
                    </div>
                    <div className="ml-[3px] flex items-center">
                        <TaskIcon>
                            <rect x="4" y="13" width="22" height="16" rx="1" fill="#1f1f1f" />
                            <rect x="12" y="3" width="18" height="20" rx="1" fill="#e9e9e9" opacity="0.9" />
                        </TaskIcon>
                        <TaskIcon>
                            <circle cx="16" cy="16" r="10" fill="none" stroke="#6d7882" strokeWidth="7" strokeDasharray="5 1.500" />
                            <circle cx="16" cy="16" r="10" fill="none" stroke="#6d7882" strokeWidth="4" />
                            <ellipse cx="16" cy="16" rx="5" ry="6" fill="#1f57a8" />
                        </TaskIcon>
                        <TaskIcon>
                            <path d="M2 4h11l3 3h14v22H2z" fill="#d9a53c" />
                            <rect x="2" y="9" width="28" height="20" fill="#f6cd5e" />
                            <rect x="10" y="22" width="14" height="7" rx="1" fill="#2f80c4" />
                        </TaskIcon>
                        <TaskIcon dot>
                            <circle cx="16" cy="16" r="14" fill="#2f86d6" />
                            <path d="M3 10c4-9 21-10 26 2 1 7-7 9-10 6 2-5-6-7-9-2-3 6 3 12 9 12-9 3-20-5-16-18z" fill="#1b5aa8" />
                            <path d="M16 2c7 0 13 5 14 12-1 5-8 6-11 3 1-5-7-8-11-3 2-7 5-12 8-12z" fill="#4cc49e" />
                        </TaskIcon>
                        <TaskIcon>
                            <rect x="2" y="8" width="28" height="23" rx="3" fill="#1e4f8c" />
                            <path d="M10 9V4a2 2 0 0 1 2-2h8a2 2 0 0 1 2 2v5" fill="none" stroke="#4faae8" strokeWidth="2" />
                            <rect x="10" y="14" width="5.500" height="5.500" fill="#e2582f" />
                            <rect x="16.500" y="14" width="5.500" height="5.500" fill="#7fba43" />
                            <rect x="10" y="20.500" width="5.500" height="5.500" fill="#2f9fe0" />
                            <rect x="16.500" y="20.500" width="5.500" height="5.500" fill="#f5bc2c" />
                        </TaskIcon>
                        <TaskIcon>
                            <path d="M12 10L24 2l7 7v20H12z" fill="#2f86d6" />
                            <path d="M12 18l19-9v20H12z" fill="#6fc4ee" />
                            <rect x="1" y="10" width="18" height="18" rx="2" fill="#1b5aa8" />
                            <ellipse cx="10" cy="19" rx="4" ry="5" fill="none" stroke="#fff" strokeWidth="2" />
                        </TaskIcon>
                        <TaskIcon active>
                            <rect x="7" y="14" width="10" height="17" fill="#f2d76e" />
                            <rect x="12" y="8" width="10" height="23" fill="#e3b64b" />
                            <rect x="19" y="1" width="10" height="30" fill="#d39b32" />
                        </TaskIcon>
                    </div>
                </div>
                <div className="ml-auto flex items-center text-[#1b1b1b]">
                    <ChevronUp size={20} strokeWidth={1.6} />
                    <svg viewBox="0 0 24 20" className="ml-[17px] w-[24px] h-[20px]" fill="#bbb" stroke="#333" strokeWidth="1.4">
                        <path d="M5 16c-5 0-5-6 0-6 1-6 9-7 11-2 6-1 8 8 1 8z" />
                        <path d="M6 2l14 17" fill="none" />
                    </svg>
                    <svg viewBox="0 0 24 24" className="ml-[14px] w-[24px] h-[24px]" fill="none" stroke="#333" strokeWidth="1.4">
                        <path d="M14 3H2v14h12M6 21h8M9 17v4M18 1h4v7h-4zM20 8v15" />
                    </svg>
                    <svg viewBox="0 0 22 20" className="ml-[8px] w-[22px] h-[20px]" fill="none" stroke="#333" strokeWidth="1.3">
                        <path d="M1 7h4l5-4v14l-5-4H1zM13 7c1 2 1 4 0 6M16 4c2 4 2 8 0 12M19 2c3 5 3 11 0 16" />
                    </svg>
                    <div className="ml-[21px] mr-[25px] text-right text-[14.500px] leading-[20px]">
                        <div>7:46 PM</div>
                        <div>4/19/2025</div>
                    </div>
                </div>
            </div>
        </div>
    )
}
